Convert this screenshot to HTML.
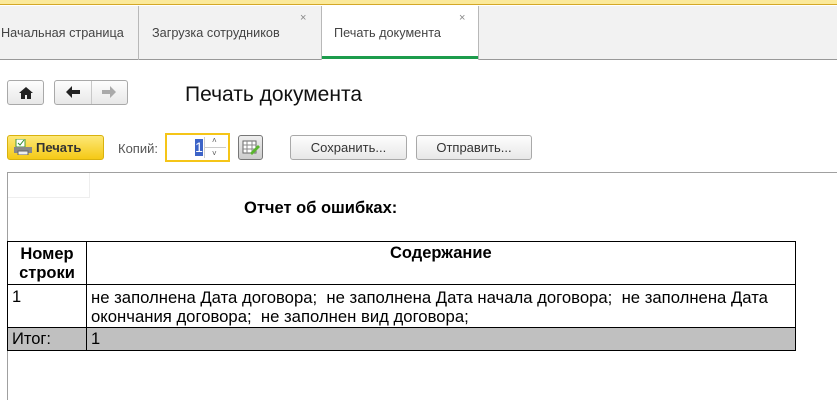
<!DOCTYPE html>
<html><head><meta charset="utf-8"><style>
*{margin:0;padding:0;box-sizing:border-box}
body{width:837px;height:400px;overflow:hidden;background:#fff;font-family:"Liberation Sans",Arial,sans-serif;position:relative;color:#333}
.a{position:absolute}
.btn{position:absolute;border:1px solid #a9a9a9;border-radius:3px;background:linear-gradient(#fdfdfd,#e8e8e8);font-size:13px;color:#333;text-align:center;line-height:23px}
.t{position:absolute;font-size:13px;white-space:nowrap}
</style></head><body>
<div class="a" style="left:0;top:0;width:837px;height:5px;background:#fbe99a;border-bottom:1px solid #d4a827"></div>
<div class="a" style="left:0;top:6px;width:837px;height:54px;background:#f2f2f2;border-bottom:1px solid #999"></div>
<div class="a" style="left:138px;top:6px;width:1px;height:54px;background:#b8b8b8"></div>
<div class="a" style="left:321px;top:6px;width:158px;height:54px;background:#fff;border-left:1px solid #b8b8b8;border-right:1px solid #b8b8b8"></div>
<div class="a" style="left:322px;top:56px;width:156px;height:3px;background:#1c9c4c"></div>
<div class="t" style="left:1px;top:26px;color:#444;font-size:12.7px">Начальная страница</div>
<div class="t" style="left:152px;top:26px;color:#444;font-size:12.7px">Загрузка сотрудников</div>
<div class="t" style="left:334px;top:26px;color:#444;font-size:12.7px">Печать документа</div>
<div class="t" style="left:300px;top:12px;font-size:11px;color:#888">×</div>
<div class="t" style="left:459px;top:12px;font-size:11px;color:#888">×</div>

<div class="btn" style="left:7px;top:80px;width:37px;height:25px"><svg width="14" height="12" viewBox="0 0 14 12" style="margin-top:6px"><path d="M7 0L0 6h2v6h4V8h2v4h4V6h2z" fill="#222"/></svg></div>
<div class="btn" style="left:54px;top:80px;width:74px;height:25px"></div>
<div class="a" style="left:91px;top:81px;width:1px;height:23px;background:#c8c8c8"></div>
<svg class="a" style="left:66px;top:86px" width="14" height="12"><path d="M0 6L6 0v4h8v4H6v4z" fill="#222"/></svg>
<svg class="a" style="left:102px;top:86px" width="14" height="12"><path d="M14 6L8 0v4H0v4h8v4z" fill="#aaa"/></svg>
<div class="t" style="left:185px;top:83px;font-size:21px;color:#111">Печать документа</div>

<div class="a" style="left:7px;top:135px;width:97px;height:25px;border:1px solid #d9b20e;border-radius:3px;background:linear-gradient(#fde877,#f5c916)"></div>
<svg class="a" style="left:14px;top:139px" width="18" height="16"><rect x="2" y="0" width="9" height="8" fill="#fff" stroke="#4a9a3a"/><path d="M4 4l2 2 4-5" stroke="#2a8a2a" fill="none"/><rect x="0" y="8" width="18" height="6" fill="#888"/><rect x="4" y="12" width="10" height="4" fill="#eee" stroke="#666"/></svg>
<div class="t" style="left:36px;top:140px;font-weight:bold;color:#333">Печать</div>
<div class="t" style="left:118px;top:141px;color:#555">Копий:</div>
<div class="a" style="left:165px;top:133px;width:65px;height:29px;border:2px solid #f5c518;background:#fff"></div>
<div class="a" style="left:195px;top:139px;width:8px;height:17px;background:#3c63c7;color:#fff;font-size:14px;line-height:17px;text-align:center">1</div>
<div class="a" style="left:204px;top:137px;width:1px;height:21px;background:#ccc"></div>
<div class="a" style="left:205px;top:147px;width:21px;height:1px;background:#ccc"></div>
<div class="t" style="left:212px;top:136px;font-size:8px;color:#555">˄</div>
<div class="t" style="left:212px;top:149px;font-size:8px;color:#555">˅</div>
<div class="a" style="left:238px;top:135px;width:25px;height:25px;border:1px solid #777;border-radius:3px;background:linear-gradient(#eee,#ccc)"></div>
<svg class="a" style="left:242px;top:140px" width="18" height="16"><rect x="1" y="1" width="13" height="12" fill="#fff" stroke="#666"/><path d="M1 5h13M1 9h13M5 1v12M10 1v12" stroke="#888"/><path d="M8 13l8-8 2 2-8 8z" fill="#5ab52e"/></svg>
<div class="btn" style="left:290px;top:135px;width:117px;height:25px">Сохранить...</div>
<div class="btn" style="left:416px;top:135px;width:116px;height:25px">Отправить...</div>

<div class="a" style="left:7px;top:172px;width:830px;height:1px;background:#a0a0a0"></div>
<div class="a" style="left:7px;top:172px;width:1px;height:228px;background:#a0a0a0"></div>
<div class="a" style="left:8px;top:173px;width:82px;height:25px;border-right:1px solid #eee;border-bottom:1px solid #eee"></div>
<div class="t" style="left:244px;top:199px;font-size:16.5px;font-weight:bold;color:#000">Отчет об ошибках:</div>

<div class="a" style="left:7px;top:241px;width:789px;height:110px;border:1px solid #000"></div>
<div class="a" style="left:8px;top:328px;width:787px;height:22px;background:#c0c0c0"></div>
<div class="a" style="left:86px;top:241px;width:1px;height:110px;background:#000"></div>
<div class="a" style="left:7px;top:284px;width:789px;height:1px;background:#000"></div>
<div class="a" style="left:7px;top:327px;width:789px;height:1px;background:#000"></div>
<div class="a" style="left:8px;top:245px;width:78px;text-align:center;font-size:16.5px;font-weight:bold;color:#000;line-height:19px">Номер<br>строки</div>
<div class="t" style="left:390px;top:244px;font-size:16.5px;font-weight:bold;color:#000">Содержание</div>
<div class="t" style="left:12px;top:288px;font-size:16.5px;color:#000">1</div>
<div class="a" style="left:91px;top:288px;font-size:16.7px;color:#000;line-height:19px;white-space:nowrap">не заполнена Дата договора;&nbsp; не заполнена Дата начала договора;&nbsp; не заполнена Дата<br>окончания договора;&nbsp; не заполнен вид договора;</div>
<div class="t" style="left:12px;top:330px;font-size:16.5px;color:#000">Итог:</div>
<div class="t" style="left:91px;top:330px;font-size:16.5px;color:#000">1</div>
</body></html>
